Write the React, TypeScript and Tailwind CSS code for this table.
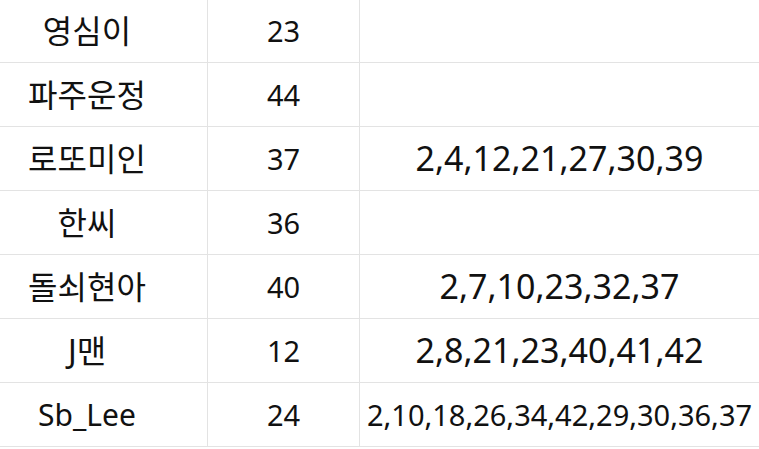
const rows: { name: string; count: string; nums: string; latin?: boolean; small?: boolean }[] = [
  { name: "영심이", count: "23", nums: "" },
  { name: "파주운정", count: "44", nums: "" },
  { name: "로또미인", count: "37", nums: "2,4,12,21,27,30,39" },
  { name: "한씨", count: "36", nums: "" },
  { name: "돌쇠현아", count: "40", nums: "2,7,10,23,32,37" },
  { name: "J맨", count: "12", nums: "2,8,21,23,40,41,42" },
  { name: "Sb_Lee", count: "24", nums: "2,10,18,26,34,42,29,30,36,37", latin: true, small: true },
];

export default function App() {
  return (
    <div
      className="h-[449px] w-[759px] overflow-hidden bg-white text-[#111]"
      style={{ fontFamily: '"Noto Sans", "Noto Sans CJK KR", sans-serif' }}
    >
      {rows.map((r, i) => (
        <div
          key={r.name}
          className={`flex border-b border-[#e3e3e3] ${i === 0 ? "h-[63px]" : "h-[64px]"}`}
        >
          <div
            className={`flex w-[208px] items-center justify-center border-r border-[#e3e3e3] pr-[33px] ${
              r.latin ? "text-[30px]" : "text-[32px]"
            }`}
          >
            {r.name}
          </div>
          <div className="flex w-[152px] items-center justify-center border-r border-[#e3e3e3] text-[29px]">
            {r.count}
          </div>
          <div
            className={`flex flex-1 items-center justify-center whitespace-nowrap ${
              r.small ? "text-[29px]" : "text-[34px]"
            }`}
          >
            {r.nums}
          </div>
        </div>
      ))}
    </div>
  );
}
